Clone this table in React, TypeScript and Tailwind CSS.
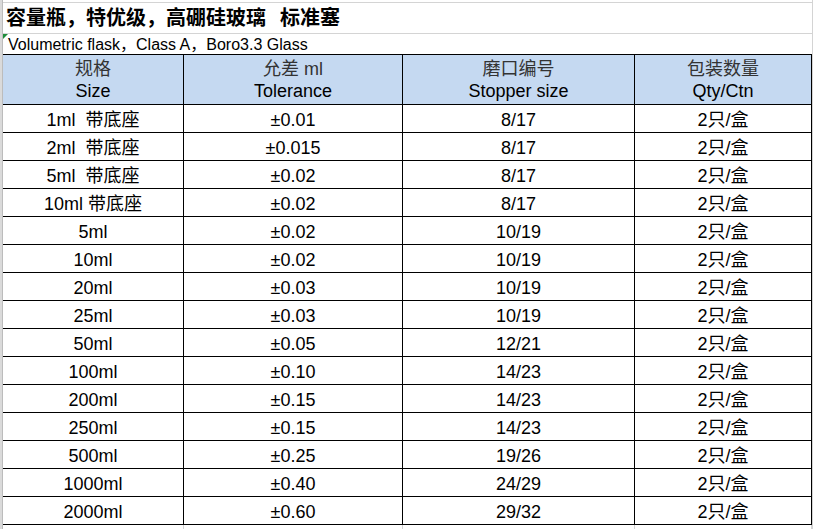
import React from "react";

const rows: [string, string, string, string][] = [
  ["1ml  带底座", "±0.01", "8/17", "2只/盒"],
  ["2ml  带底座", "±0.015", "8/17", "2只/盒"],
  ["5ml  带底座", "±0.02", "8/17", "2只/盒"],
  ["10ml 带底座", "±0.02", "8/17", "2只/盒"],
  ["5ml", "±0.02", "10/19", "2只/盒"],
  ["10ml", "±0.02", "10/19", "2只/盒"],
  ["20ml", "±0.03", "10/19", "2只/盒"],
  ["25ml", "±0.03", "10/19", "2只/盒"],
  ["50ml", "±0.05", "12/21", "2只/盒"],
  ["100ml", "±0.10", "14/23", "2只/盒"],
  ["200ml", "±0.15", "14/23", "2只/盒"],
  ["250ml", "±0.15", "14/23", "2只/盒"],
  ["500ml", "±0.25", "19/26", "2只/盒"],
  ["1000ml", "±0.40", "24/29", "2只/盒"],
  ["2000ml", "±0.60", "29/32", "2只/盒"],
];

const headers: [string, string][] = [
  ["规格", "Size"],
  ["允差 ml", "Tolerance"],
  ["磨口编号", "Stopper size"],
  ["包装数量", "Qty/Ctn"],
];

const cols = "grid grid-cols-[181px_219px_232px_177px]";

export default function App() {
  return (
    <div
      className="flex w-[813px] h-[529px] bg-white overflow-hidden text-black"
      style={{ fontFamily: '"Liberation Sans", "Noto Sans CJK SC", sans-serif' }}
    >
      {/* row header strip */}
      <div className="w-[3px] shrink-0 bg-[#dadada] border-r border-[#bcbcbc]" />

      <div className="flex flex-col w-[809px]">
        <div className="h-[3px] border-b border-[#d4d4d4]" />
        <div className="h-[32px] flex items-center pl-[3px] border-b border-[#d4d4d4]">
          <span className="text-[20px] font-bold whitespace-pre leading-none">
            容量瓶，特优级，高硼硅玻璃
            <span className="inline-block w-[14px]" />
            标准塞
          </span>
        </div>
        <div className="relative h-[20px] flex items-center pl-[5px]">
          <div className="absolute left-0 top-0 w-0 h-0 border-t-[5px] border-r-[5px] border-t-[#1e8c3a] border-r-transparent" />
          <span className="text-[16px] leading-none whitespace-pre pt-[1px]">
            Volumetric flask，Class A，Boro3.3 Glass
          </span>
        </div>

        {/* table */}
        <div className="border-t border-black">
          <div className={`${cols} h-[50px] bg-[#c5d9f1] border-b border-black`}>
            {headers.map(([cn, en], i) => (
              <div
                key={i}
                className="flex flex-col items-center justify-center border-r border-black text-[18px] leading-[22px] pt-[1px]"
              >
                <span className="text-[#333]">{cn}</span>
                <span>{en}</span>
              </div>
            ))}
          </div>
          {rows.map((r, i) => (
            <div key={i} className={`${cols} h-[28px] border-b border-black`}>
              {r.map((c, j) => (
                <div
                  key={j}
                  className="flex items-center justify-center border-r border-black text-[18px] leading-none whitespace-pre pt-[3px]"
                >
                  {c}
                </div>
              ))}
            </div>
          ))}
          <div className={`${cols} h-[4px]`}>
            <div className="border-r border-[#d4d4d4]" />
            <div className="border-r border-[#d4d4d4]" />
            <div className="border-r border-[#d4d4d4]" />
            <div className="border-r border-[#d4d4d4]" />
          </div>
        </div>
      </div>
      <div className="w-[1px] bg-[#d4d4d4]" />
    </div>
  );
}
